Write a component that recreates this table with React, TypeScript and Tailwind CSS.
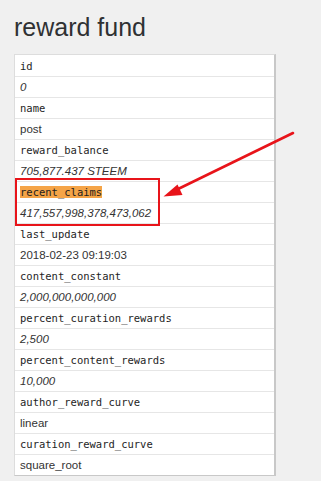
import React from "react";

const rows: { k: string; v: string; italic: boolean }[] = [
  { k: "id", v: "0", italic: true },
  { k: "name", v: "post", italic: false },
  { k: "reward_balance", v: "705,877.437 STEEM", italic: true },
  { k: "recent_claims", v: "417,557,998,378,473,062", italic: true },
  { k: "last_update", v: "2018-02-23 09:19:03", italic: false },
  { k: "content_constant", v: "2,000,000,000,000", italic: true },
  { k: "percent_curation_rewards", v: "2,500", italic: true },
  { k: "percent_content_rewards", v: "10,000", italic: true },
  { k: "author_reward_curve", v: "linear", italic: false },
  { k: "curation_reward_curve", v: "square_root", italic: false },
];

export default function App() {
  return (
    <div className="relative w-[321px] h-[481px] overflow-hidden bg-[#f0f0f0] text-[#333]">
      <div className="pl-[14px] pt-[13px]">
        <h1
          className="text-[25px] leading-[28px] text-[#2f3133] mb-[13px]"
          style={{ fontFamily: '"Liberation Sans", Arial, sans-serif' }}
        >
          reward fund
        </h1>
        <div className="w-[262px] bg-white border border-[#ddd] border-r-[#c8c8c8] border-b-[#c8c8c8] border-r-2">
          {rows.map((r, i) => (
            <React.Fragment key={r.k}>
              <div
                className={`h-[21px] flex items-center px-[5px] ${i === 0 ? "" : "border-t border-[#e6e6e6]"}`}
              >
                <span
                  className={`text-[10.5px] leading-[12px] text-[#1e1e1e] ${r.k === "recent_claims" ? "bg-[#f5a447]" : ""}`}
                  style={{ fontFamily: '"DejaVu Sans Mono", monospace' }}
                >
                  {r.k}
                </span>
              </div>
              <div className="h-[21px] flex items-center px-[5px] border-t border-[#e6e6e6]">
                <span
                  className={`text-[11.5px] leading-[14px] ${r.italic ? "italic" : ""}`}
                  style={{ fontFamily: '"Liberation Sans", Arial, sans-serif' }}
                >
                  {r.v}
                </span>
              </div>
            </React.Fragment>
          ))}
        </div>
      </div>
      <div className="absolute left-[15px] top-[178px] w-[145px] h-[48px] border-[2.5px] border-[#e8141a]" />
      <svg className="absolute left-0 top-0" width="321" height="481" viewBox="0 0 321 481">
        <line x1="293" y1="133" x2="174" y2="191" stroke="#e8141a" strokeWidth="2.6" strokeLinecap="round" />
        <polygon points="163.5,196.5 177.5,184.5 182.5,195" fill="#e8141a" />
      </svg>
    </div>
  );
}
